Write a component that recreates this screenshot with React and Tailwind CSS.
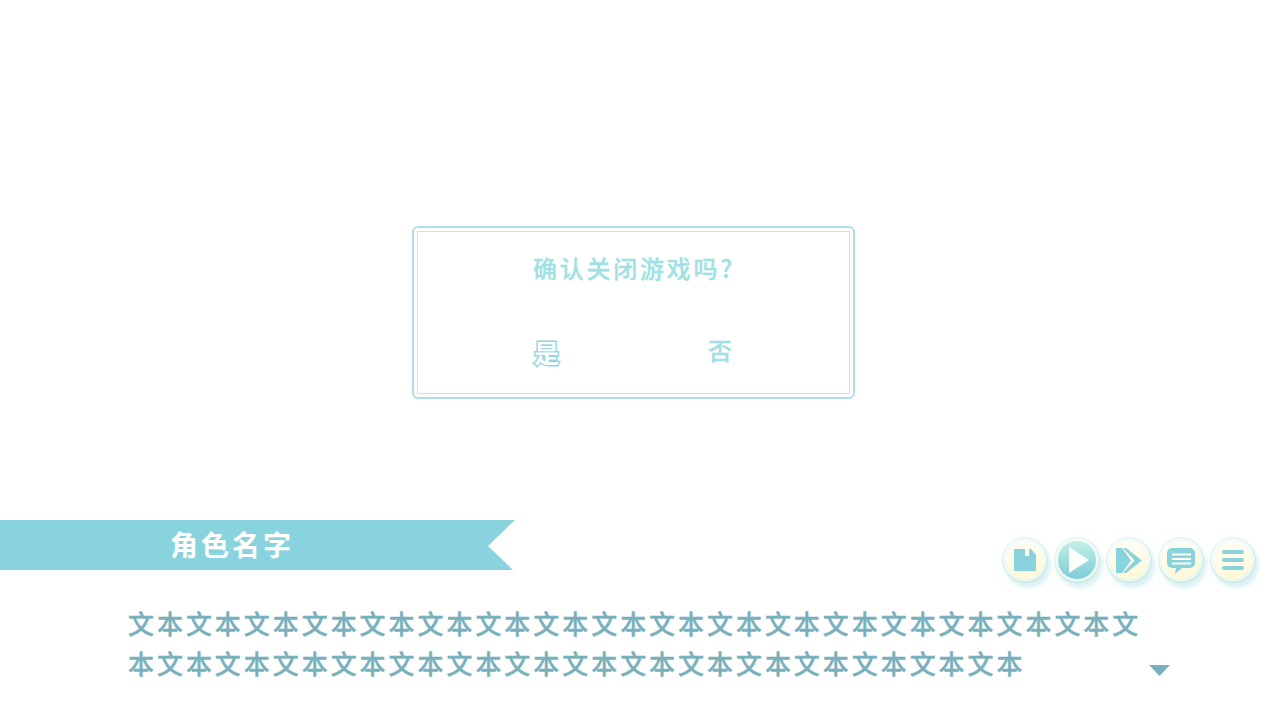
const cjk = 'font-["Noto_Sans_CJK_SC","Noto_Sans",sans-serif]'

function RoundButton({ children }) {
  return (
    <div className="w-[46px] h-[46px] rounded-full p-[1px] bg-[linear-gradient(160deg,#e6f7f2,#b4e0d4)] shadow-[3px_5px_4px_#dcf1f4]">
      <div className="w-full h-full rounded-full p-[3px] bg-[linear-gradient(160deg,#f8fdfa,#e6f6ee)] blur-[0.5px]">
        {children}
      </div>
    </div>
  )
}

const creamFace = 'w-full h-full rounded-full flex items-center justify-center bg-[linear-gradient(180deg,#fffef6,#fff8d6)]'

function SaveIcon() {
  return (
    <svg width="24" height="24" viewBox="0 0 24 24" className="blur-[0.2px]">
      <path fill="#88d3dd" d="M1 1h17l5 6v16H1z" />
      <rect x="12" y="1" width="4" height="7" fill="#fffdf0" />
    </svg>
  )
}

function NextIcon() {
  return (
    <svg width="28" height="27" viewBox="0 0 28 27" className="blur-[0.2px]">
      <path fill="#88d3dd" d="M1 1h6l9 12.5L7 26H1z" />
      <path fill="#88d3dd" d="M8 1h3l16 12.500L11 26H8l11.500-12.500z" />
    </svg>
  )
}

function ChatIcon() {
  return (
    <svg width="30" height="27" viewBox="0 0 30 27" className="blur-[0.2px]">
      <path fill="#88d3dd" d="M6 1h18a5 5 0 0 1 5 5v10a5 5 0 0 1-5 5H16l-7 6 1-6H6a5 5 0 0 1-5-5V6a5 5 0 0 1 5-5z" />
      <path fill="#fffdf0" d="M6 6.500h19v2H6zM6 11h19v2H6zM6 15.500h19v2H6z" />
    </svg>
  )
}

function MenuIcon() {
  return (
    <svg width="24" height="22" viewBox="0 0 24 22" className="blur-[0.2px]">
      <rect x="1" y="1" width="22" height="4" rx="2" fill="#88d3dd" />
      <rect x="1" y="9" width="22" height="4" rx="2" fill="#88d3dd" />
      <rect x="1" y="17" width="22" height="4" rx="2" fill="#88d3dd" />
    </svg>
  )
}

export default function App() {
  return (
    <div className={`w-[1280px] h-[720px] bg-white overflow-hidden flex flex-col ${cjk}`}>

      {/* Confirm dialog */}
      <div className="mt-[226px] ml-[412px] w-[443px] h-[173px] border-2 border-[#ace0e6] rounded-[6px] p-[3px]">
        <div className="h-full border border-[#c5e8ec] flex flex-col">
          <p className="mt-[18px] ml-[115px] text-[24px] leading-[36px] tracking-[2.75px] font-medium text-[#a0e1e4] whitespace-nowrap [-webkit-text-stroke:0.3px_#a0e1e4]">
            确认关闭游戏吗?
          </p>
          <div className="mt-[46px] ml-[116px] flex items-start">
            <span className="w-[174px] text-[25px] leading-[40px] font-bold text-white [-webkit-text-stroke:3px_#8fd7e0] [paint-order:stroke_fill]">是</span>
            <span className="text-[24px] leading-[36px] font-medium text-[#a0e1e4] [-webkit-text-stroke:0.3px_#a0e1e4]">否</span>
          </div>
        </div>
      </div>

      {/* Name banner and quick buttons */}
      <div className="mt-[121px] flex items-start">
        <div className="w-[515px] h-[50px] bg-[#88d3dd] [clip-path:polygon(0_0,100%_0,488px_26px,513px_100%,0_100%)] pl-[170px] text-[28px] leading-[48px] tracking-[3px] font-bold text-white">
          角色名字
        </div>
        <div className="ml-[487px] mt-[17px] flex gap-[6px]">
          <RoundButton><div className={creamFace}><SaveIcon /></div></RoundButton>
          <RoundButton>
            <div className="w-full h-full rounded-full flex items-center justify-center bg-[linear-gradient(180deg,#c4f0e6,#7ccbd8)]">
              <svg className="ml-[3px]" width="20" height="26" viewBox="0 0 20 26">
                <path fill="#fff" d="M0 0l20 13L0 26z" />
              </svg>
            </div>
          </RoundButton>
          <RoundButton><div className={creamFace}><NextIcon /></div></RoundButton>
          <RoundButton><div className={creamFace}><ChatIcon /></div></RoundButton>
          <RoundButton><div className={creamFace}><MenuIcon /></div></RoundButton>
        </div>
      </div>

      {/* Dialogue text */}
      <div className="mt-[20px] pl-[128px] flex">
        <p className="w-[1018px] text-[26px] leading-[40px] tracking-[2.95px] font-medium text-[#78b0bc] break-all [-webkit-text-stroke:0.35px_#78b0bc]">
          {'文本'.repeat(33)}
        </p>
        <svg className="ml-[3px] mt-[62px]" width="21" height="11" viewBox="0 0 21 11">
          <path fill="#78b0bc" d="M0 0h21L10.500 11z" />
        </svg>
      </div>
    </div>
  )
}
